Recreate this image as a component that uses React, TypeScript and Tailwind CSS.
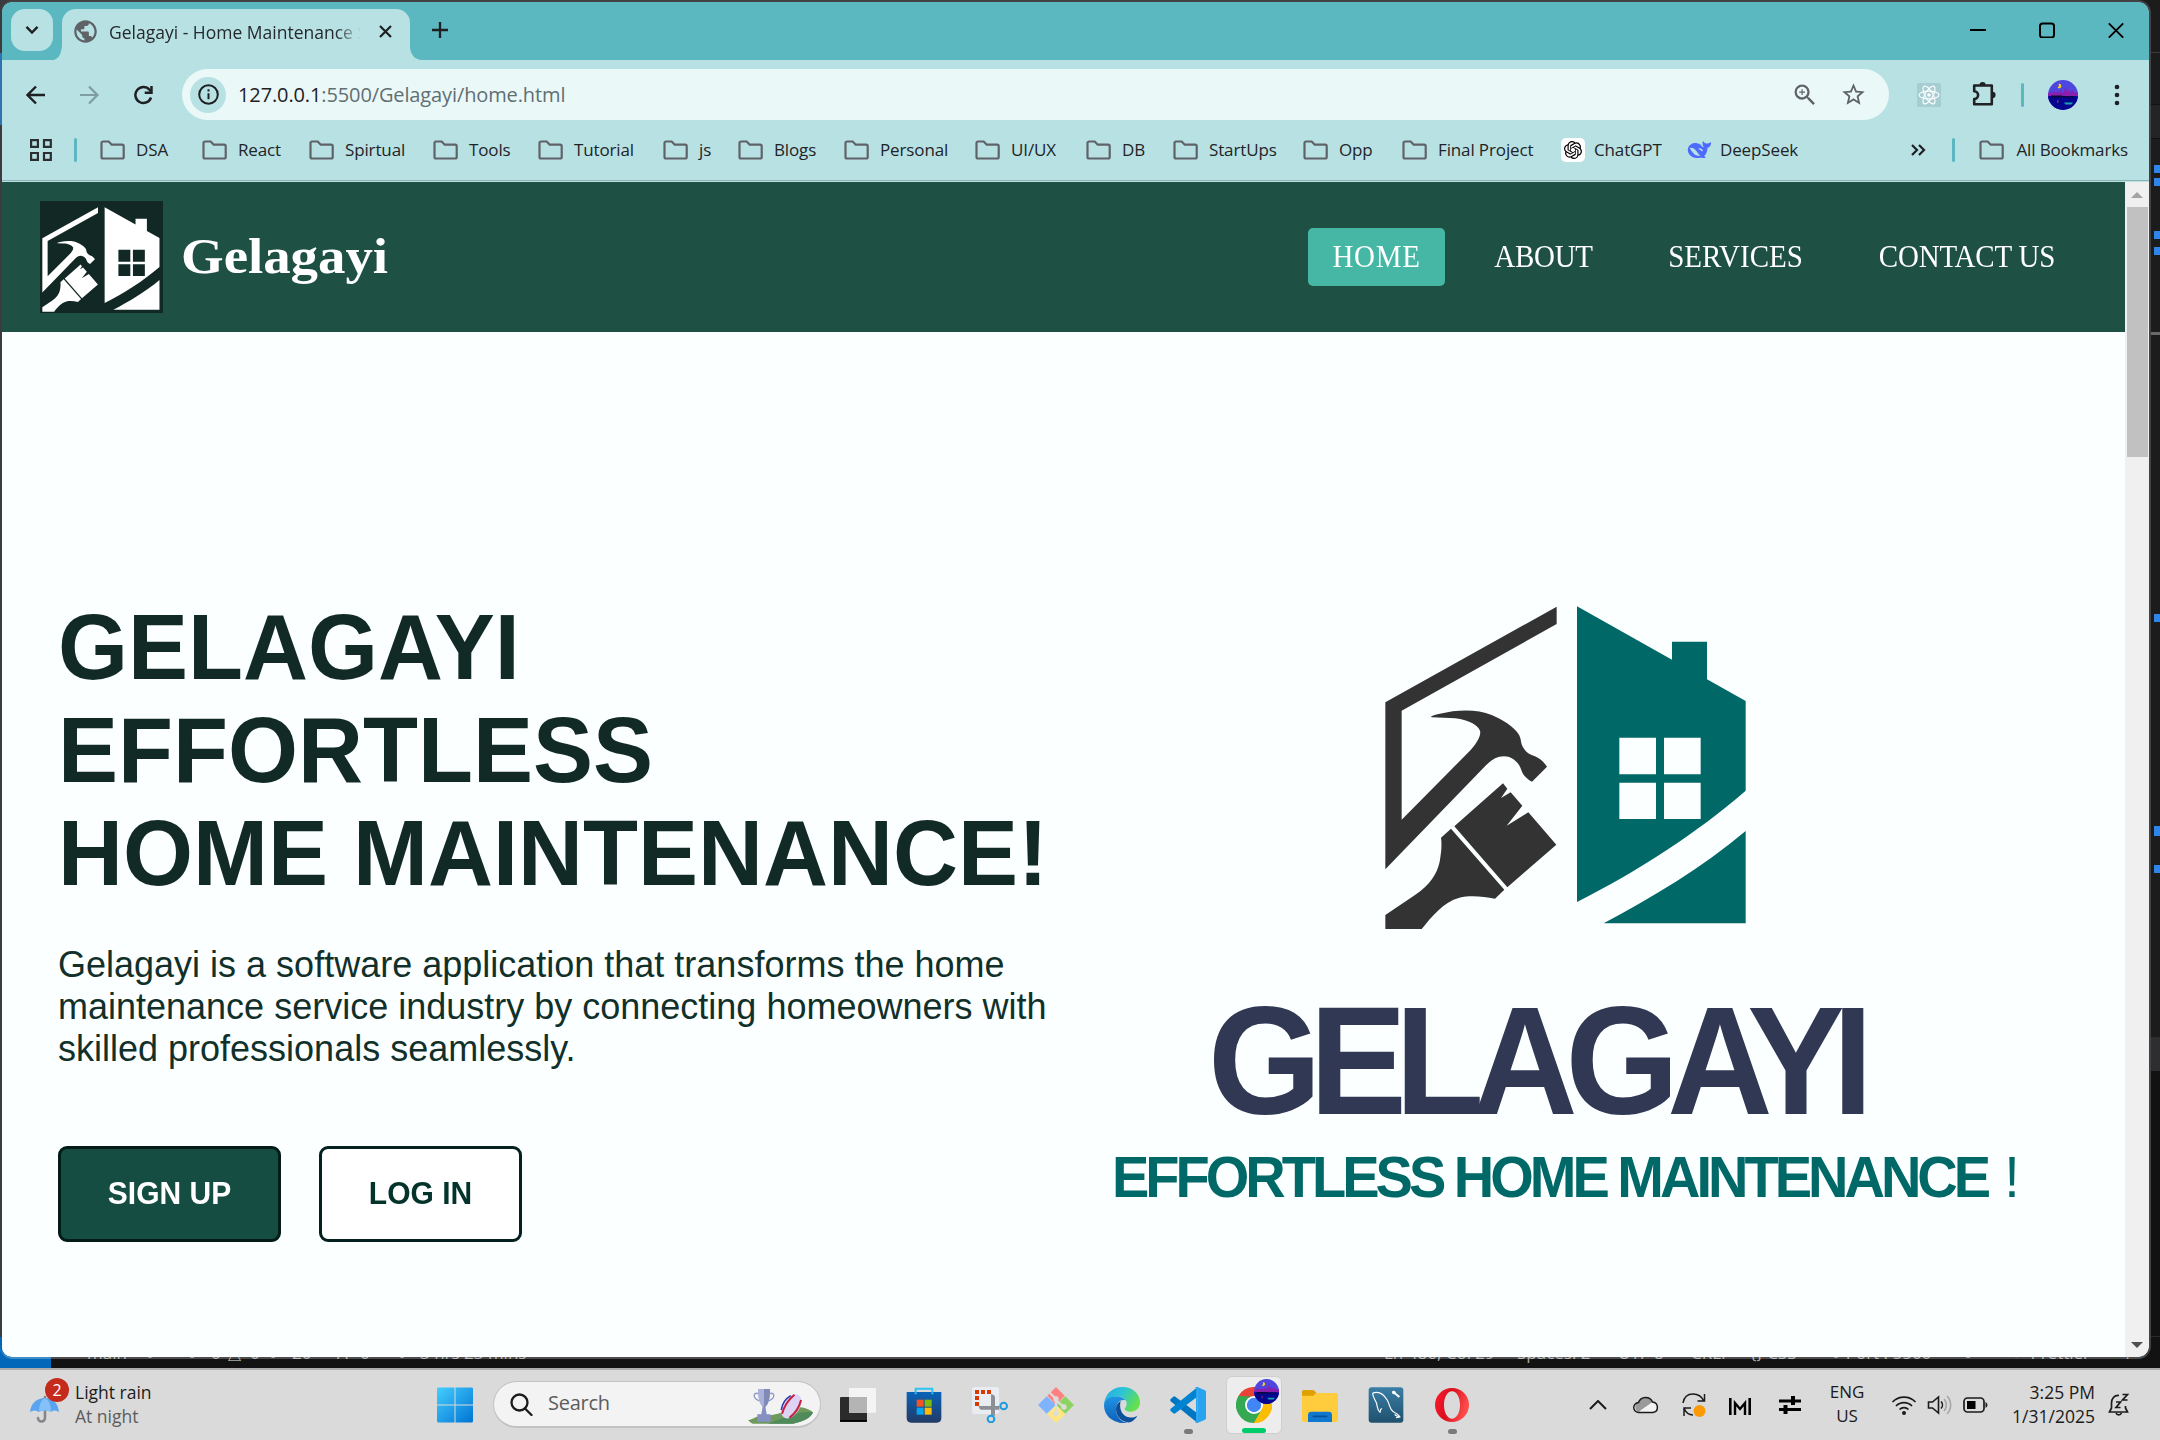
import React from "react";
import { SiOpenai } from "react-icons/si";
import { MdOutlineZoomIn, MdStarBorder, MdPublic } from "react-icons/md";

const UI = "font-['Open_Sans','Noto_Sans',sans-serif]";
const SERIF = "font-['Liberation_Serif',Georgia,serif]";
const ARIAL = "font-['Liberation_Sans',Arial,sans-serif]";

/* ---------- Brand mark ---------- */

function HouseMark({
  className,
  viewBox,
  left,
  right,
}: {
  className: string;
  viewBox: string;
  left: string;
  right: string;
}) {
  return (
    <svg className={className} viewBox={viewBox} preserveAspectRatio="none">
      <g fill={left}>
        <path d="M136 367 L650 80 L650 132 L185 392 L185 719 L392 510 C412 488 424 466 420 452 C412 430 372 415 330 414 L275 412 C268 409 285 404 300 401 C350 389 410 386 455 405 C490 420 520 440 535 461 C546 478 540 490 552 506 C560 518 570 524 585 529 C600 535 612 547 621 560 L576 605 C560 597 548 584 544 570 C538 550 518 529 492 529 C470 529 455 540 438 556 L136 868 Z" />
        <path d="M343 739 L489 610 L502 626 L483 654 L512 637 L547 677 L500 737 L565 697 L649 794 L502 922 Z" />
        <path d="M333 746 L493 929 L465 956 C430 949 390 945 358 953 C310 966 275 1010 245 1047 L136 1047 L136 1005 L225 945 C270 915 292 880 299 845 C304 815 306 795 303 773 Z" />
      </g>
      <g fill={right}>
        <path
          fillRule="evenodd"
          d="M711 79 L996 239 L996 185 L1101 185 L1101 298 L1217 363 L1217 632 C1070 760 890 875 711 966 Z M838 473 V583 H948 V473 Z M972 473 V583 H1082 V473 Z M838 608 V717 H948 V608 Z M972 608 V717 H1082 V608 Z"
        />
        <path d="M1217 753 V1030 H791 C935 952 1085 865 1217 753 Z" />
      </g>
    </svg>
  );
}

/* ---------- Browser icons ---------- */

function FolderIcon() {
  return (
    <svg className="h-[20px] w-[25px] shrink-0" viewBox="0 0 25 20" fill="none" stroke="#5f6368" strokeWidth="2.200">
      <path d="M1.500 3a1.500 1.500 0 0 1 1.500-1.500h5.700l3 3.200h10.500a1.500 1.500 0 0 1 1.500 1.500v10.800a1.500 1.500 0 0 1-1.500 1.500H3a1.500 1.500 0 0 1-1.500-1.500z" />
    </svg>
  );
}

function WhaleIcon() {
  return (
    <svg className="h-[20px] w-[25px]" viewBox="0 0 25 20">
      <path
        fill="#4d6bfe"
        d="M1 8.500C2 4.500 6 2.600 10 3.200c1.600.3 2.600.4 3.800 1.800C14.700 6 15.500 7 17 7.200c-1.700-1.900-1.800-4.200-.9-6.400.6 1.400 1.500 2.200 2.900 2.700 1.500.2 3.300-.3 5-1.500.3 2.600-.7 5-3.500 5.900-.2 3.600-1.400 6.500-3.500 8.400.9.300 1.500.8 1.800 1.500-1.900.5-3.400.3-4.700-.4C8.500 19 3.600 17.300 1.600 13.300.8 11.600.6 10 1 8.500z"
      />
      <path fill="#b8e1e4" d="M2.800 7.800c3-.4 5.500 1.300 7.200 4 1 1.600 2 3 3.600 4-3.400.3-5.300-.6-7.200-2.600-1.500-1.600-2.800-3-3.600-5.400zM11.800 8.200c2-.3 3.600.6 4.300 2.900-1 .3-1.400.2-2-.4-.8-.9-1.300-1.300-2.500-1.400z" />
    </svg>
  );
}

function ReactBadge() {
  return (
    <svg className="h-[24px] w-[24px]" viewBox="0 0 24 24">
      <rect width="24" height="24" rx="1.500" fill="#a6cdd1" />
      <g fill="none" stroke="#fff" strokeWidth="1.100">
        <ellipse cx="12" cy="12" rx="10" ry="3.900" />
        <ellipse cx="12" cy="12" rx="10" ry="3.900" transform="rotate(60 12 12)" />
        <ellipse cx="12" cy="12" rx="10" ry="3.900" transform="rotate(120 12 12)" />
      </g>
      <circle cx="12" cy="12" r="1.800" fill="#fff" />
    </svg>
  );
}

function PuzzleIcon() {
  return (
    <svg className="h-[26px] w-[26px]" viewBox="0 0 26 26" fill="none">
      <path d="M3.200 4.500h17.600v18.700H3.200v-5.200a3.900 3.900 0 0 0 0-7.800z" stroke="#202124" strokeWidth="2.600" strokeLinejoin="round" />
      <path d="M8.500 4a3.100 3.100 0 0 1 6.200 0zM21.500 10.800a3.100 3.100 0 0 1 0 6.200z" fill="#202124" />
    </svg>
  );
}

function Avatar({ className }: { className: string }) {
  return (
    <svg className={className} viewBox="0 0 30 30">
      <defs>
        <clipPath id="avatar-disc">
          <circle cx="15" cy="15" r="15" />
        </clipPath>
      </defs>
      <g clipPath="url(#avatar-disc)">
        <rect width="30" height="30" fill="#4f46e0" />
        <path d="M0 16V13l2 .5 1-2 2 1.500 1-2.500 2 2.500 2-2 1 2 2-3 1 3 2-1 1-5.500 2 5.500 2-3 1 3 3-2 1 3 4-1v4z" fill="#8a1fae" />
        <path d="M0 16h30v14H0z" fill="#05058f" />
        <path d="M3 15.500h10l4 .8h9v1.200H3z" fill="#08083a" />
        <path d="M10.500 4a2.200 2.200 0 1 1-1 3.500c1.400-.3 1.800-2.200 1-3.500z" fill="#f5d21b" />
        <path d="M16 22.500h9l-1.500 2h-6z" fill="#14a5ae" />
        <path d="M9 20h1.500v3H9z" fill="#7a2a6a" />
      </g>
    </svg>
  );
}

const bookmarks: { name: string; width: string; icon?: "gpt" | "whale" }[] = [
  { name: "DSA", width: "w-[102px]" },
  { name: "React", width: "w-[107px]" },
  { name: "Spirtual", width: "w-[124px]" },
  { name: "Tools", width: "w-[105px]" },
  { name: "Tutorial", width: "w-[125px]" },
  { name: "js", width: "w-[75px]" },
  { name: "Blogs", width: "w-[106px]" },
  { name: "Personal", width: "w-[131px]" },
  { name: "UI/UX", width: "w-[111px]" },
  { name: "DB", width: "w-[87px]" },
  { name: "StartUps", width: "w-[130px]" },
  { name: "Opp", width: "w-[99px]" },
  { name: "Final Project", width: "w-[159px]" },
  { name: "ChatGPT", width: "w-[126px]", icon: "gpt" },
  { name: "DeepSeek", width: "w-[150px]", icon: "whale" },
];

function TabStrip() {
  return (
    <div className="flex h-[58px] shrink-0 items-start bg-[#5bb8c1]">
      <div className="ml-[9px] mt-[7px] flex h-[42px] w-[42px] items-center justify-center rounded-[14px] bg-[#b8e1e4]">
        <svg className="h-[10px] w-[14px]" viewBox="0 0 14 10" fill="none" stroke="#1f2023" strokeWidth="2.400">
          <path d="M1.500 1.800 7 7.500l5.500-5.700" />
        </svg>
      </div>
      <svg className="mt-[44px] h-[14px] w-[9px]" viewBox="0 0 9 14">
        <path d="M9 0v14H0C6 13 8 8 9 0z" fill="#b8e1e4" />
      </svg>
      <div className="mt-[7px] flex h-[51px] w-[348px] items-center rounded-t-[14px] bg-[#b8e1e4] pb-[7px]">
        <MdPublic className="ml-[10px] h-[27px] w-[27px] text-[#5f6368]" />
        <div className={`ml-[10px] mt-[2px] h-[28px] w-[252px] overflow-hidden whitespace-nowrap text-[17.500px] leading-[28px] text-[#26292c] [mask-image:linear-gradient(to_right,#000_90%,transparent)] ${UI}`}>
          Gelagayi - Home Maintenance S
        </div>
        <svg className="ml-[18px] h-[13px] w-[13px]" viewBox="0 0 13 13" stroke="#1f2023" strokeWidth="2.200">
          <path d="M1 1l11 11M12 1 1 12" />
        </svg>
      </div>
      <svg className="mt-[46px] h-[12px] w-[12px]" viewBox="0 0 12 12">
        <path d="M0 0v12h12C5 12 1 7 0 0z" fill="#b8e1e4" />
      </svg>
      <svg className="ml-[10px] mt-[20px] h-[16px] w-[16px]" viewBox="0 0 16 16" stroke="#1f2023" strokeWidth="2.300">
        <path d="M8 0v16M0 8h16" />
      </svg>
      <div className="mt-[20px] flex flex-1 items-center justify-end gap-[53px] pr-[25px]">
        <svg className="h-[16px] w-[16px]" viewBox="0 0 16 16" stroke="#000" strokeWidth="2">
          <path d="M0 8h16" />
        </svg>
        <svg className="h-[16px] w-[16px]" viewBox="0 0 16 16" fill="none" stroke="#000" strokeWidth="2">
          <rect x="1" y="1.500" width="14" height="14" rx="2.500" />
        </svg>
        <svg className="h-[16px] w-[16px]" viewBox="0 0 16 16" stroke="#000" strokeWidth="1.800">
          <path d="M.8 1.300l14.400 14.400M15.200 1.300.8 15.700" />
        </svg>
      </div>
    </div>
  );
}

function Toolbar() {
  return (
    <div className="flex h-[60px] shrink-0 items-center pt-[9px]">
      <svg className="ml-[24px] h-[20px] w-[20px]" viewBox="0 0 20 20" fill="none" stroke="#1f2023" strokeWidth="2.400">
        <path d="M19 10H2M10 1.500 1.500 10l8.500 8.500" />
      </svg>
      <svg className="ml-[33px] h-[20px] w-[20px]" viewBox="0 0 20 20" fill="none" stroke="#7f9da0" strokeWidth="2.200">
        <path d="M1 10h17M10 1.500l8.500 8.500-8.500 8.500" />
      </svg>
      <svg className="ml-[34px] h-[20px] w-[21px]" viewBox="0 0 21 20" fill="none" stroke="#1f2023" strokeWidth="2.500">
        <path d="M18 12.500A8 8 0 1 1 16.500 4.800l1.200 1.500" />
        <path d="M18.500 1v6.700h-6.800" />
      </svg>
      <div className="ml-[28px] flex h-[51px] w-[1707px] items-center rounded-full bg-[#ebf8f8]">
        <div className="ml-[8px] flex h-[36px] w-[36px] items-center justify-center rounded-full bg-[#b8e1e4]">
          <svg className="h-[21px] w-[21px]" viewBox="0 0 21 21" fill="none" stroke="#1f2023">
            <circle cx="10.500" cy="10.500" r="9.300" strokeWidth="2" />
            <path d="M10.500 9.300v6M10.500 5.300v2.200" strokeWidth="2" />
          </svg>
        </div>
        <div className={`ml-[12px] whitespace-nowrap text-[20px] tracking-[-0.120px] text-[#1f2023] ${UI}`}>
          127.0.0.1<span className="text-[#5f6f72]">:5500/Gelagayi/home.html</span>
        </div>
        <div className="flex flex-1 items-center justify-end pr-[22px]">
          <MdOutlineZoomIn className="h-[28px] w-[28px] text-[#5f6368]" />
          <MdStarBorder className="ml-[21px] h-[27px] w-[27px] text-[#5f6368]" />
        </div>
      </div>
      <div className="ml-[28px]">
        <ReactBadge />
      </div>
      <div className="ml-[30px] mt-[-2px]">
        <PuzzleIcon />
      </div>
      <div className="ml-[24px] h-[24px] w-[3px] rounded bg-[#5bb8c1]" />
      <Avatar className="ml-[24px] h-[30px] w-[30px]" />
      <svg className="ml-[36px] h-[22px] w-[6px]" viewBox="0 0 6 22" fill="#1f2023">
        <circle cx="3" cy="3" r="2.300" />
        <circle cx="3" cy="11" r="2.300" />
        <circle cx="3" cy="19" r="2.300" />
      </svg>
    </div>
  );
}

function BookmarkBar() {
  return (
    <div className={`flex h-[60px] shrink-0 items-center text-[17px] tracking-[-0.130px] text-[#1f2427] ${UI}`}>
      <svg className="ml-[28px] h-[22px] w-[22px]" viewBox="0 0 22 22" fill="none" stroke="#2b2e31" strokeWidth="2.200">
        <path d="M1.100 1.100h6.800v6.800H1.100zM14 1.100h6.800v6.800H14zM1.100 14h6.800v6.800H1.100zM14 14h6.800v6.800H14z" />
      </svg>
      <div className="ml-[22px] mr-[23px] h-[24px] w-[3px] rounded bg-[#5bb8c1]" />
      {bookmarks.map((b) => (
        <div key={b.name} className={`flex shrink-0 items-center whitespace-nowrap ${b.width}`}>
          {b.icon === "gpt" ? (
            <div className="mr-[9px] flex h-[24px] w-[24px] items-center justify-center rounded-[5px] bg-white">
              <SiOpenai className="h-[18px] w-[18px] text-black" />
            </div>
          ) : b.icon === "whale" ? (
            <div className="mr-[8px]">
              <WhaleIcon />
            </div>
          ) : (
            <div className="mr-[11px]">
              <FolderIcon />
            </div>
          )}
          {b.name}
        </div>
      ))}
      <div className="flex flex-1 items-center justify-end pr-[21px]">
        <svg className="h-[12px] w-[15px]" viewBox="0 0 15 12" fill="none" stroke="#1f2023" strokeWidth="2.200">
          <path d="M1 1l5 5-5 5M8 1l5 5-5 5" />
        </svg>
        <div className="ml-[26px] mr-[24px] h-[24px] w-[3px] rounded bg-[#5bb8c1]" />
        <FolderIcon />
        <span className="ml-[12px] whitespace-nowrap">All Bookmarks</span>
      </div>
    </div>
  );
}

/* ---------- Web page ---------- */

function SiteHeader() {
  return (
    <header className="flex h-[150px] shrink-0 items-center bg-[#1f5044] text-white">
      <HouseMark
        className="ml-[38px] h-[112px] w-[123px] bg-[#122824]"
        viewBox="114.500 21 1135 1038"
        left="#fff"
        right="#fff"
      />
      <div className={`ml-[18px] mt-[-3px] origin-left scale-x-[1.075] text-[51px] font-bold leading-[60px] ${SERIF}`}>
        Gelagayi
      </div>
      <nav className={`flex flex-1 items-center justify-end pr-[45px] text-[29px] ${SERIF}`}>
        <a className="mr-[25px] flex h-[58px] w-[137px] items-center justify-center rounded-[5px] bg-[#45b7a4] tracking-[0.700px]">
          <span className="scale-y-[1.060]">HOME</span>
        </a>
        <a className="flex h-[58px] w-[147px] items-center justify-center tracking-[-0.300px]">
          <span className="scale-y-[1.060]">ABOUT</span>
        </a>
        <a className="ml-[25px] flex h-[58px] w-[187px] items-center justify-center">
          <span className="scale-y-[1.060]">SERVICES</span>
        </a>
        <a className="ml-[25px] flex h-[58px] w-[226px] items-center justify-center whitespace-nowrap tracking-[-0.200px]">
          <span className="scale-y-[1.060]">CONTACT US</span>
        </a>
      </nav>
    </header>
  );
}

function Hero() {
  return (
    <main className={`flex min-h-0 flex-1 bg-[#fcffff] ${ARIAL}`}>
      <section className="w-[1050px] shrink-0 pl-[56px] pt-[264px]">
        <h1 className="origin-top scale-y-[1.040] whitespace-nowrap text-[90px] font-bold leading-[99px] text-[#122a25]">
          GELAGAYI
          <br />
          EFFORTLESS
          <br />
          HOME MAINTENANCE!
        </h1>
        <p className="mt-[51px] whitespace-nowrap text-[36px] leading-[42px] text-[#12302a]">
          Gelagayi is a software application that transforms the home
          <br />
          maintenance service industry by connecting homeowners with
          <br />
          skilled professionals seamlessly.
        </p>
        <div className="mt-[76px] flex gap-[38px] text-[30px] font-bold">
          <button className="flex h-[96px] w-[223px] items-center justify-center rounded-[9px] border-[3px] border-[#031c18] bg-[#164d43] pb-[3px] text-white">
            <span className="scale-y-[1.060]">SIGN UP</span>
          </button>
          <button className="flex h-[96px] w-[203px] items-center justify-center rounded-[9px] border-[3px] border-[#04201f] bg-white pb-[3px] text-[#04332b]">
            <span className="scale-y-[1.060]">LOG IN</span>
          </button>
        </div>
      </section>
      <section className="flex-1 whitespace-nowrap pt-[248px]">
        <HouseMark className="ml-[288px] h-[370px] w-[460px]" viewBox="0 0 1380 1110" left="#333333" right="#006866" />
        <div className="ml-[156px] mt-[42px] origin-bottom scale-y-[1.050] text-[146px] font-bold leading-[146px] tracking-[-12px] text-[#313853]">
          GELAGAYI
        </div>
        <div className="ml-[60px] mt-[12px] flex origin-bottom scale-y-[1.040] text-[56px] font-bold leading-[56px] tracking-[-4px] text-[#006866]">
          EFFORTLESS HOME MAINTENANCE<span className="ml-[17px] font-normal">!</span>
        </div>
      </section>
    </main>
  );
}

function ScrollBar() {
  return (
    <div className="flex w-[24px] shrink-0 flex-col items-center bg-[#f0f0f0]">
      <svg className="mt-[10px] h-[6px] w-[12px]" viewBox="0 0 12 6" fill="#a3a3a3">
        <path d="M6 0l6 6H0z" />
      </svg>
      <div className="mt-[9px] h-[250px] w-[21px] bg-[#c1c1c1]" />
      <div className="flex-1" />
      <svg className="mb-[9px] h-[6px] w-[12px]" viewBox="0 0 12 6" fill="#505050">
        <path d="M0 0h12L6 6z" />
      </svg>
    </div>
  );
}

/* ---------- Editor behind the browser ---------- */

function EditorEdge() {
  return (
    <div className="ml-auto flex h-full w-[11px] flex-col items-end bg-[#1c1c1c]">
      <div className="mt-[52px] h-[1px] w-full bg-[#3a3a3a]" />
      <div className="mt-[51px] h-[35px] w-full border-y border-[#111] bg-[#242424]" />
      <div className="mt-[26px] h-[8px] w-[6px] bg-[#2f86ea]" />
      <div className="mt-[5px] h-[8px] w-[6px] bg-[#2f86ea]" />
      <div className="mt-[45px] h-[8px] w-[6px] bg-[#2f86ea]" />
      <div className="mt-[8px] h-[8px] w-[6px] bg-[#2f86ea]" />
      <div className="mt-[77px] h-[3px] w-full bg-[#6a6a6a]" />
      <div className="mt-[279px] h-[8px] w-[6px] bg-[#2f86ea]" />
      <div className="mt-[204px] h-[10px] w-[6px] bg-[#2f86ea]" />
      <div className="mt-[29px] h-[8px] w-[6px] bg-[#2f86ea]" />
      <div className="mt-[164px] h-[34px] w-full bg-[#2e2e31]" />
      <div className="h-[265px] w-full bg-[#121212]" />
      <div className="h-[1px] w-full bg-[#2b2b2b]" />
    </div>
  );
}

function EditorStatusBar() {
  return (
    <div className={`absolute inset-x-0 bottom-0 flex h-[31px] items-start overflow-hidden whitespace-nowrap bg-[#121212] text-[17px] leading-[32px] text-[#a8a8a8] ${UI}`}>
      <div className="h-full w-[51px] bg-[#0067b9]" />
      <span className="ml-[36px] w-[58px]">main</span>
      <span className="w-[42px]">○</span>
      <span className="w-[24px]">○</span>
      <span className="w-[17px]">0</span>
      <span className="w-[22px]">△</span>
      <span className="w-[18px]">0</span>
      <span className="w-[24px]">○</span>
      <span className="w-[45px]">20</span>
      <span className="w-[23px]">A</span>
      <span className="w-[37px]">0</span>
      <span className="w-[23px]">○</span>
      <span className="w-[120px]">3 hrs 23 mins</span>
      <div className="ml-auto flex">
        <span className="w-[133px]">Ln 486, Col 29</span>
        <span className="w-[101px]">Spaces: 2</span>
        <span className="w-[73px]">UTF-8</span>
        <span className="w-[59px]">CRLF</span>
        <span className="w-[81px]">{"{} CSS"}</span>
        <span className="w-[132px]">○ Port : 5500</span>
        <span className="w-[49px]">○</span>
        <span className="w-[108px]">✓ Prettier</span>
        <span className="w-[40px]">♤</span>
      </div>
    </div>
  );
}

/* ---------- Taskbar ---------- */

function UmbrellaIcon() {
  return (
    <svg className="h-[42px] w-[42px]" viewBox="0 0 42 42">
      <path d="M15 14v21a3.500 3.500 0 0 1-7 0" fill="none" stroke="#85858a" strokeWidth="2.600" strokeLinecap="round" />
      <path d="M0 29C1 20 7 15 15 15s13 5 14 14c-3-2-6-2-8 0-3-2-9-2-12 0-3-2-6-2-9 0z" fill="#5ba4f0" />
      <path d="M9 29c0-7 2-12 6-14 4 2 6 7 6 14-3-2-9-2-12 0z" fill="#84c0fa" />
    </svg>
  );
}

function TrophyArt() {
  return (
    <svg className="h-[38px] w-[66px]" viewBox="0 0 198 114">
      <path d="M0 100c18-6 25-13 45-14 30 0 60-8 90-24 26-4 48 3 60 14-6 16-28 28-60 34H14c-5-2-9-6-14-10z" fill="#6f9a5c" />
      <path d="M120 88c26-12 60-14 75-12-6 16-28 28-60 34H60c20-8 36-14 60-22z" fill="#4f8a5a" />
      <path d="M30 6h36c0 30-4 48-18 56C34 54 30 36 30 6z" fill="#a9b2d8" />
      <path d="M48 6h18c0 30-4 48-18 56z" fill="#8089b8" />
      <path d="M31 20c-16-6-18 14 3 22M65 20c16-6 18 14-3 22" fill="none" stroke="#8f98c5" strokeWidth="4" />
      <path d="M44 58h8l4 24h12v22H28V82h12z" fill="#8790c2" />
      <g transform="rotate(33 130 58)">
        <ellipse cx="130" cy="58" rx="25" ry="40" fill="#dcd3f5" />
        <path d="M111 32c-9 18-9 34 0 52" fill="none" stroke="#2a3fae" strokeWidth="5" />
        <path d="M119 24c-7 22-7 46 0 68M144 26c7 20 7 44 0 64" fill="none" stroke="#c8203c" strokeWidth="6" />
      </g>
    </svg>
  );
}

function TaskViewIcon() {
  return (
    <svg className="h-[36px] w-[36px]" viewBox="0 0 108 108">
      <rect x="0" y="30" width="81" height="75" rx="3" fill="#2b2b2b" />
      <rect x="0" y="99" width="81" height="5" fill="#000" />
      <rect x="27" y="3" width="81" height="74" rx="3" fill="#f4f4f4" />
      <path d="M27 30h54v47H27z" fill="#b4b4b4" />
    </svg>
  );
}

function StoreIcon() {
  return (
    <svg className="h-[36px] w-[36px]" viewBox="0 0 108 108">
      <defs>
        <linearGradient id="store-bag" x1="0" y1="0" x2="0" y2="1">
          <stop offset="0" stopColor="#0a63b8" />
          <stop offset="1" stopColor="#223a66" />
        </linearGradient>
      </defs>
      <path d="M29 22V5h50v17" fill="none" stroke="#2cc3f5" strokeWidth="6" strokeLinejoin="round" />
      <path d="M2 15h104v78q0 14-14 14H16Q2 107 2 93z" fill="url(#store-bag)" />
      <path d="M29 16v6M79 16v6" stroke="#2cc3f5" strokeWidth="6" />
      <path d="M32 38h21v21H32z" fill="#f35325" />
      <path d="M56 38h21v21H56z" fill="#81bc06" />
      <path d="M32 62h21v21H32z" fill="#05a6f0" />
      <path d="M56 62h21v21H56z" fill="#ffba08" />
    </svg>
  );
}

function SnipIcon() {
  return (
    <svg className="h-[36px] w-[36px]" viewBox="0 0 108 108">
      <rect x="0" y="0" width="81" height="81" rx="8" fill="#e9edf2" />
      <path d="M9 9h12v12H9zM27 9h12v12H27zM45 9h12v12H45zM9 27h12v12H9zM9 45h12v12H9z" fill="#d83b01" />
      <path d="M20 57h62v11H28q-6 0-8-11zM57 22q10 0 12 8v56H57z" fill="#8b8f96" />
      <circle cx="95" cy="57" r="10" fill="none" stroke="#1c9be0" strokeWidth="6" />
      <circle cx="57" cy="96" r="10" fill="none" stroke="#1c9be0" strokeWidth="6" />
    </svg>
  );
}

function GitIcon() {
  return (
    <svg className="h-[36px] w-[36px]" viewBox="0 0 108 108">
      <path d="M54 0l26 26-26 28-26-28z" fill="#ff8080" />
      <path d="M26 28l28 26-28 26L0 54z" fill="#80b3ff" />
      <path d="M82 28l26 26-26 26-28-26z" fill="#8dd35f" />
      <path d="M54 54l28 28-28 26-26-26z" fill="#ffe680" />
      <path d="M36 18l18 18v46M54 40l24 20" fill="none" stroke="#dcdcdc" strokeWidth="7" />
      <circle cx="54" cy="36" r="8" fill="#dcdcdc" />
      <circle cx="78" cy="60" r="8" fill="#dcdcdc" />
      <circle cx="54" cy="80" r="8" fill="#dcdcdc" />
    </svg>
  );
}

function EdgeIcon() {
  return (
    <svg className="h-[36px] w-[36px]" viewBox="0 0 108 108">
      <defs>
        <linearGradient id="edge-top" x1="0" y1="0" x2="1" y2="0.500">
          <stop offset="0" stopColor="#2aa6e8" />
          <stop offset="0.500" stopColor="#2cc5d4" />
          <stop offset="1" stopColor="#63e04d" />
        </linearGradient>
        <linearGradient id="edge-left" x1="0" y1="0" x2="0" y2="1">
          <stop offset="0" stopColor="#1e95e4" />
          <stop offset="1" stopColor="#0f60b8" />
        </linearGradient>
      </defs>
      <path d="M0 54C2 22 24 0 56 0c32 0 52 22 52 46 0 18-14 28-28 28-12 0-18-4-18-8s6-6 6-16c0-12-12-22-28-22C20 28 4 40 0 54z" fill="url(#edge-top)" />
      <path d="M0 54c2-16 18-26 38-26 12 0 22 5 27 12-14-4-29 6-29 26 0 22 16 40 34 41-8 2-20 2-30-2C16 98 0 80 0 54z" fill="url(#edge-left)" />
      <path d="M50 42c-10 6-14 14-14 24 0 24 20 42 42 40 10-4 18-12 22-20-12 8-32 8-42-4-8-8-12-24-8-40z" fill="#0c4f9c" />
    </svg>
  );
}

function CodeIcon() {
  return (
    <svg className="h-[36px] w-[36px]" viewBox="0 0 108 108">
      <path d="M2 36l8-7q3-2 6 0l66 50v28L2 43q-3-4 0-7z" fill="#0076c2" />
      <path d="M2 72l8 7q3 2 6 0l66-50V1L2 65q-3 4 0 7z" fill="#0084d2" />
      <path d="M82 0l23 10q3 2 3 5v78q0 3-3 5L82 108q-5 1-7-3 5 2 7-3V6q-2-5-7-3 2-4 7-3z" fill="#27a3f0" />
      <path d="M78 2l4-2v108l-4-3z" fill="#27a3f0" />
    </svg>
  );
}

function ChromeIcon() {
  return (
    <svg className="h-[36px] w-[36px]" viewBox="0 0 48 48">
      <path d="M24 24 3.200 12A24 24 0 0 1 44.800 12z" fill="#ea4335" />
      <path d="M24 24 44.800 12A24 24 0 0 1 24 48z" fill="#fbbc04" />
      <path d="M24 24 24 48A24 24 0 0 1 3.200 12z" fill="#34a853" />
      <path d="M24 12h20.800L34.400 30z" fill="#fbbc04" />
      <path d="M3.200 12 13.600 30 24 12z" fill="#34a853" />
      <path d="M3.200 12h41.600L24 13z" fill="#ea4335" />
      <path d="M34.400 30 24 48 16 34z" fill="#34a853" />
      <path d="M34.400 30 24 48A24 24 0 0 0 44.800 12H30z" fill="#fbbc04" />
      <circle cx="24" cy="24" r="12" fill="#fff" />
      <circle cx="24" cy="24" r="9.600" fill="#4285f4" />
    </svg>
  );
}

function ExplorerIcon() {
  return (
    <svg className="h-[36px] w-[36px]" viewBox="0 0 108 108">
      <path d="M0 14q0-5 5-5h26q5 0 8 4l6 7v20H0z" fill="#e0a100" />
      <path d="M0 26h34l8-8h60q6 0 6 6v76q0 5-5 5H5q-5 0-5-5z" fill="#ffcc3d" />
      <path d="M18 105V84q0-10 10-10h52q10 0 10 10v21z" fill="#0f79cf" />
      <path d="M34 88h40" stroke="#0a4f94" strokeWidth="5" strokeLinecap="round" />
    </svg>
  );
}

function DolphinIcon() {
  return (
    <svg className="h-[36px] w-[36px]" viewBox="0 0 108 108">
      <defs>
        <linearGradient id="workbench-tile" x1="0" y1="0" x2="0" y2="1">
          <stop offset="0" stopColor="#3a7ea6" />
          <stop offset="1" stopColor="#20516e" />
        </linearGradient>
      </defs>
      <rect x="2" y="1" width="104" height="106" rx="9" fill="url(#workbench-tile)" />
      <path d="M14 18c18-6 34 4 44 22 8 14 6 26 18 34 10 5 16 8 20 16-10-3-14-3-16-8M96 90l-12 2M14 18c0 14 8 20 12 32 3 14 2 20 10 26 2-8 2-12 6-10" fill="none" stroke="#fff" strokeWidth="3.500" strokeLinejoin="round" />
      <path d="M74 12q8-2 10 6l12 10-4 4-12-10q-8 0-8-8z" fill="#fff" />
    </svg>
  );
}

function OperaIcon() {
  return (
    <svg className="h-[36px] w-[36px]" viewBox="0 0 108 108">
      <defs>
        <linearGradient id="opera-ring" x1="0" y1="0" x2="1" y2="0.300">
          <stop offset="0" stopColor="#ff1b2d" />
          <stop offset="0.500" stopColor="#d9101f" />
          <stop offset="1" stopColor="#ff4b4b" />
        </linearGradient>
      </defs>
      <path fillRule="evenodd" d="M54 3a51 51 0 1 0 0 102 51 51 0 1 0 0-102zM54 13c14 0 24 18 24 41S68 95 54 95 30 77 30 54s10-41 24-41z" fill="url(#opera-ring)" />
    </svg>
  );
}

const apps: { icon: React.ReactNode; running?: boolean; active?: boolean }[] = [
  { icon: <TaskViewIcon /> },
  { icon: <StoreIcon /> },
  { icon: <SnipIcon /> },
  { icon: <GitIcon /> },
  { icon: <EdgeIcon /> },
  { icon: <CodeIcon />, running: true },
  { icon: <ChromeIcon />, active: true },
  { icon: <ExplorerIcon /> },
  { icon: <DolphinIcon /> },
  { icon: <OperaIcon />, running: true },
];

function SystemTray() {
  return (
    <div className="ml-auto flex items-center pr-[30px]">
      <svg className="h-[10px] w-[18px]" viewBox="0 0 18 10" fill="none" stroke="#1b1b1b" strokeWidth="2">
        <path d="M1 9l8-8 8 8" />
      </svg>
      <svg className="ml-[26px] h-[18px] w-[26px]" viewBox="0 0 26 18">
        <path d="M6 16.500a5 5 0 0 1-.5-10A7.500 7.500 0 0 1 19.500 6a5.300 5.300 0 0 1 .5 10.500z" fill="#f3f3f3" />
        <path d="M6 16A5 5 0 0 1 5.500 6.500 7.500 7.500 0 0 1 19.500 6L8 14z" fill="#9a9a9a" />
        <path d="M6 16.500a5 5 0 0 1-.5-10A7.500 7.500 0 0 1 19.500 6a5.300 5.300 0 0 1 .5 10.500z" fill="none" stroke="#1b1b1b" strokeWidth="1.500" />
      </svg>
      <svg className="ml-[22px] h-[26px] w-[26px]" viewBox="0 0 26 26">
        <path d="M2 11C3 5 7 2 12 2s9 3 11 7M23.500 2v7h-7M3 24v-8h7M3 16c2 5 6 7 9 7" fill="none" stroke="#1b1b1b" strokeWidth="1.500" />
        <circle cx="18.500" cy="19" r="6" fill="#fb9a06" />
      </svg>
      <svg className="ml-[22px] mt-[3px] h-[17px] w-[22px]" viewBox="0 0 22 17">
        <path d="M1.300 0v17M20.700 0v17" stroke="#000" strokeWidth="2.600" />
        <path d="M6 17V5l5 6 5-6v12" fill="none" stroke="#000" strokeWidth="2.400" />
      </svg>
      <svg className="ml-[28px] h-[18px] w-[22px]" viewBox="0 0 22 18">
        <path d="M0 5h22M0 13.500h22" stroke="#000" strokeWidth="3" />
        <path d="M14 0v9M6.500 9v9" stroke="#000" strokeWidth="4" />
      </svg>
      <div className={`ml-[24px] mt-[-3px] w-[44px] text-center text-[17px] leading-[24px] text-[#1b1b1b] ${UI}`}>
        ENG
        <br />
        US
      </div>
      <svg className="ml-[22px] h-[22px] w-[26px]" viewBox="0 0 26 22" fill="none" stroke="#1b1b1b" strokeWidth="1.700">
        <path d="M1.500 8a16 16 0 0 1 23 0M5 12a11 11 0 0 1 16 0M8.500 15.500a6.300 6.300 0 0 1 9 0" />
        <circle cx="13" cy="19" r="2" fill="#1b1b1b" stroke="none" />
      </svg>
      <svg className="ml-[10px] h-[22px] w-[25px]" viewBox="0 0 25 22" fill="none" stroke="#1b1b1b" strokeWidth="1.600">
        <path d="M1.500 8v6h4l6 5V3l-6 5zM14 7.500a5 5 0 0 1 0 7" />
        <path d="M17 5a9 9 0 0 1 0 12M20 2a13 13 0 0 1 0 18" stroke="#a5a5a5" />
      </svg>
      <svg className="ml-[11px] h-[16px] w-[25px]" viewBox="0 0 25 16">
        <rect x="1" y="1" width="20" height="14" rx="3.500" fill="none" stroke="#1b1b1b" strokeWidth="1.700" />
        <rect x="4" y="4" width="8.500" height="8" fill="#000" />
        <path d="M22.500 5v6q2-1 2-3t-2-3z" fill="#1b1b1b" />
      </svg>
      <div className={`ml-[18px] mt-[-3px] w-[89px] whitespace-nowrap text-right text-[17.500px] leading-[24px] text-[#1b1b1b] ${UI}`}>
        3:25 PM
        <br />
        1/31/2025
      </div>
      <svg className="ml-[13px] h-[24px] w-[22px]" viewBox="0 0 22 24" fill="none" stroke="#1b1b1b" strokeWidth="1.700">
        <path d="M11 2.500C6 2 3.500 6 3.500 10v5L1.500 19h18l-2-4v-2M8 20a3 3 0 0 0 5.500 0" />
        <path d="M8 9h4.500L8 14.500h4.500M14.500 1.500h5l-5 5.500h5" />
      </svg>
    </div>
  );
}

function Taskbar() {
  return (
    <footer className={`flex h-[72px] shrink-0 items-center border-t-2 border-[#adadad] bg-[#dadada] ${UI}`}>
      <div className="relative ml-[30px] mt-[-2px] h-[42px] w-[42px]">
        <UmbrellaIcon />
        <div className="absolute left-[15px] top-[-5px] flex h-[24px] w-[24px] items-center justify-center rounded-full bg-[#c42b1c] text-[16px] text-white">
          2
        </div>
      </div>
      <div className="ml-[3px] mt-[-3px] w-[121px] whitespace-nowrap text-[17.500px] leading-[24px] text-[#1b1b1b]">
        Light rain
        <br />
        <span className="text-[#5c5c5c]">At night</span>
      </div>
      <svg className="ml-[241px] mt-[-1px] h-[36px] w-[36px]" viewBox="0 0 36 36">
        <defs>
          <linearGradient id="win-logo" x1="0" y1="0" x2="1" y2="1">
            <stop offset="0" stopColor="#45cdfd" />
            <stop offset="1" stopColor="#0074d4" />
          </linearGradient>
        </defs>
        <path d="M0 1.500Q0 .5 1.500.5h16v17H0zM18.500.5h16q1.500 0 1.500 1v16H18.500zM0 18.500h17.500v17h-16Q0 35.500 0 34zM18.500 18.500H36V34q0 1.500-1.500 1.500h-16z" fill="url(#win-logo)" />
      </svg>
      <div className="ml-[20px] mt-[-1px] flex h-[47px] w-[328px] items-center rounded-full border border-b-2 border-[#c2c2c2] bg-[#f3f3f3]">
        <svg className="ml-[16px] h-[23px] w-[23px]" viewBox="0 0 23 23" fill="none" stroke="#1b1b1b" strokeWidth="2.300">
          <circle cx="9.500" cy="9.500" r="8" />
          <path d="M15 15.500l6.500 6.500" strokeLinecap="round" />
        </svg>
        <span className="ml-[15px] mt-[-2px] text-[20px] tracking-[-0.250px] text-[#5c5c5c]">Search</span>
        <div className="ml-auto mr-[6px] mt-[4px]">
          <TrophyArt />
        </div>
      </div>
      <div className="ml-[4px] mt-[-1px] flex">
        {apps.map((app, i) => (
          <div key={i} className="flex h-[68px] w-[66px] items-center justify-center">
            <div
              className={
                app.active
                  ? "relative flex h-[58px] w-[56px] items-center justify-center rounded-[6px] border border-[#cfcfcf] bg-[#ededed]"
                  : "relative flex h-[58px] w-[56px] items-center justify-center"
              }
            >
              {app.icon}
              {app.active && <Avatar className="absolute right-[2px] top-[2px] h-[25px] w-[25px]" />}
              {app.active && <div className="absolute bottom-0 h-[5px] w-[24px] rounded-full bg-[#00cc6a]" />}
              {app.running && <div className="absolute bottom-0 h-[5px] w-[9px] rounded-full bg-[#7a7a7a]" />}
            </div>
          </div>
        ))}
      </div>
      <SystemTray />
    </footer>
  );
}

export default function App() {
  return (
    <div className="flex h-[1440px] w-[2160px] flex-col overflow-hidden bg-[#1c1c1c]">
      <div className="relative h-[1368px] shrink-0">
        <div className="absolute inset-0 flex">
          <div className="h-full w-[20px] bg-[#3c3c3e]">
            <div className="mt-[53px] h-[72px] w-full bg-[#2f74b0]" />
          </div>
          <EditorEdge />
        </div>
        <EditorStatusBar />
        <div className="relative mr-[9px] flex h-[1359px] flex-col overflow-hidden rounded-[13px] border-b-2 border-r-2 border-t-2 border-b-white/25 border-r-[#434345] border-t-[#434345] pl-[2px]">
          <div className="flex min-h-0 flex-1 flex-col overflow-hidden rounded-[10px] bg-[#b8e1e4]">
            <TabStrip />
            <Toolbar />
            <BookmarkBar />
            <div className="h-[2px] shrink-0 border-t border-[#8fb3b5]" />
            <div className="flex min-h-0 flex-1">
              <div className="flex w-[2123px] shrink-0 flex-col">
                <SiteHeader />
                <Hero />
              </div>
              <ScrollBar />
            </div>
          </div>
        </div>
      </div>
      <Taskbar />
    </div>
  );
}
